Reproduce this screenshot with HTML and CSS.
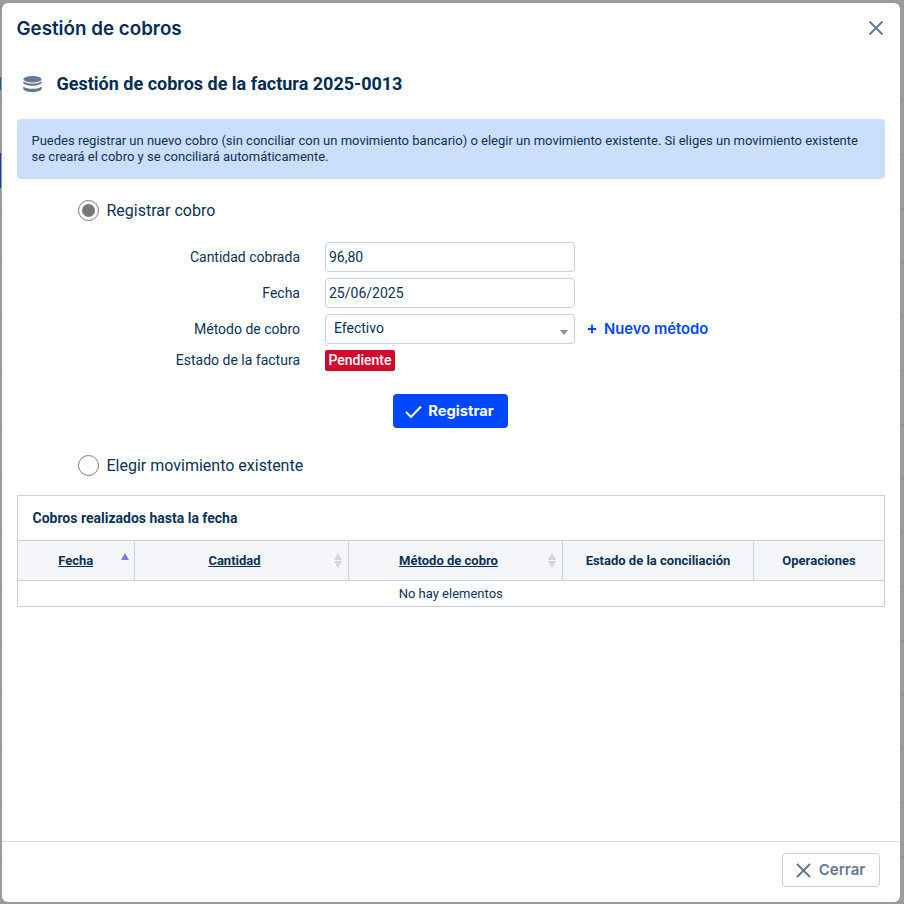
FILE: index.html
```html
<!DOCTYPE html>
<html lang="es">
<head>
<meta charset="utf-8">
<title>Gestión de cobros</title>
<link rel="stylesheet" href="styles.css">
</head>
<body>
<div class="modal">
  <header class="modal-header">
    <h1 class="modal-title">Gestión de cobros</h1>
    <svg class="close-icon" viewBox="0 0 16 16" width="16" height="16"><path d="M1.5 1.5L14.5 14.5M14.5 1.5L1.5 14.5"/></svg>
  </header>
  <main class="modal-body">
    <div class="subtitle">
      <svg class="db-icon" viewBox="0 0 19 17" width="19" height="17">
        <ellipse cx="9.5" cy="3.2" rx="9.2" ry="3.2"/>
        <path d="M.3 5.2v1.3c0 1.8 4.1 3.2 9.2 3.2s9.2-1.4 9.2-3.2V5.2c-1.7 1.6-5.3 2.4-9.2 2.4S2 6.8.3 5.2z"/>
        <path d="M.3 10.4v2.4c0 1.8 4.1 3.2 9.2 3.2s9.2-1.400 9.200-3.200v-2.400c-1.700 1.600-5.300 2.400-9.200 2.400S2 12 .3 10.400z"/>
      </svg>
      <h2 class="subtitle-text">Gestión de cobros de la factura 2025-0013</h2>
    </div>
    <div class="notice">Puedes registrar un nuevo cobro (sin conciliar con un movimiento bancario) o elegir un movimiento existente. Si eliges un movimiento existente<br>se creará el cobro y se conciliará automáticamente.</div>
    <div class="radio-row first"><span class="radio checked"></span><span>Registrar cobro</span></div>
    <div class="form-grid">
      <label class="form-label">Cantidad cobrada</label>
      <div class="input">96,80</div>
      <label class="form-label">Fecha</label>
      <div class="input">25/06/2025</div>
      <label class="form-label">Método de cobro</label>
      <div class="method-field">
        <div class="input select">Efectivo<span class="caret"></span></div>
        <a class="new-method"><svg viewBox="0 0 10 10" width="10" height="10"><path d="M5 .8v8.400M.8 5h8.400"/></svg>Nuevo método</a>
      </div>
      <label class="form-label status">Estado de la factura</label>
      <div><span class="badge">Pendiente</span></div>
    </div>
    <div class="submit-row">
      <button class="btn-primary"><svg viewBox="0 0 17 13" width="17" height="13"><path d="M1 7l5 5L16 1.500"/></svg>Registrar</button>
    </div>
    <div class="radio-row second"><span class="radio"></span><span>Elegir movimiento existente</span></div>
    <section class="panel">
      <div class="panel-title">Cobros realizados hasta la fecha</div>
      <table class="data-table">
        <colgroup><col class="c1"><col class="c2"><col class="c3"><col class="c4"><col class="c5"></colgroup>
        <thead>
          <tr>
            <th><u>Fecha</u><span class="sort asc"></span></th>
            <th class="sortable"><u>Cantidad</u><span class="sort both"></span></th>
            <th class="sortable"><u>Método de cobro</u><span class="sort both"></span></th>
            <th>Estado de la conciliación</th>
            <th>Operaciones</th>
          </tr>
        </thead>
        <tbody>
          <tr><td colspan="5">No hay elementos</td></tr>
        </tbody>
      </table>
    </section>
  </main>
  <footer class="modal-footer">
    <button class="btn-close"><svg viewBox="0 0 15 15" width="15" height="15"><path d="M1 1l13 13M14 1L1 14"/></svg>Cerrar</button>
  </footer>
</div>
</body>
</html>
```
FILE: styles.css
```css
* { box-sizing: border-box; }
html, body { margin: 0; height: 100%; }
body {
  background:
    linear-gradient(#0b5fa8, #0b5fa8) 0 77px / 1px 13px no-repeat,
    linear-gradient(#0b3fc0, #0b3fc0) 0 153px / 1px 35px no-repeat,
    repeating-linear-gradient(transparent 0 53px, #8c8c8c 53px 54px) 0 47px,
    #9b9b9b;
  font-family: Roboto, "Liberation Sans", sans-serif;
  color: #0b3258;
  overflow: hidden;
}
.modal {
  margin: 3px 4px 2px 1.5px;
  height: 899px;
  background: #fff;
  border-radius: 6px;
  display: flex;
  flex-direction: column;
}
.modal-header {
  height: 51px;
  padding: 0 16.500px 0 15px;
  display: flex;
  align-items: center;
  justify-content: space-between;
}
.modal-title {
  margin: 0;
  font: 600 18.800px/24px Inter, sans-serif;
  color: #002d55;
}
.close-icon { margin-bottom: 2px; }
.close-icon path { fill: none; stroke: #64788f; stroke-width: 1.9; }
.modal-body { flex: 1; padding: 0 15px; }
.subtitle {
  height: 60px;
  display: flex;
  align-items: center;
  padding-left: 6px;
  gap: 15px;
}
.db-icon { fill: #64788f; flex: none; }
.subtitle-text { margin: 0; font: 700 18px/24px Roboto, sans-serif; color: #002d55; }
.notice {
  margin-top: 5px;
  height: 60px;
  background: #cbdffd;
  border-radius: 4px;
  padding: 14px 15px;
  font-size: 13px;
  line-height: 15.500px;
}
.radio-row {
  display: flex;
  align-items: center;
  gap: 8px;
  padding-left: 61px;
  font-size: 16px;
  line-height: 20px;
}
.radio-row.first { margin-top: 21px; }
.radio-row.second { margin-top: 27px; }
.radio {
  width: 21px;
  height: 21px;
  border: 1px solid #7a7a7a;
  border-radius: 50%;
  background: #fff;
  display: block;
  flex: none;
}
.radio.checked { padding: 3px; background: #777 content-box; }
.form-grid {
  margin-top: 21px;
  display: grid;
  grid-template-columns: 283.500px 1fr;
  column-gap: 25px;
  row-gap: 6px;
  font-size: 14px;
}
.form-label { text-align: right; line-height: 30px; }
.form-label.status { line-height: 21px; }
.input {
  width: 250px;
  height: 30px;
  border: 1px solid #c7d2de;
  border-radius: 4px;
  padding: 0 3px;
  line-height: 28px;
  font-size: 14px;
  background: #fff;
}
.select { position: relative; padding-left: 8px; line-height: 26px; }
.caret {
  position: absolute;
  right: 6px;
  top: 15px;
  border-left: 4px solid transparent;
  border-right: 4px solid transparent;
  border-top: 5px solid #8f8f8f;
}
.method-field { display: flex; align-items: center; gap: 12px; }
.new-method {
  display: flex;
  align-items: center;
  gap: 7px;
  color: #0047ff;
  font: 600 14.800px/18px Inter, sans-serif;
}
.new-method path { fill: none; stroke: #0047ff; stroke-width: 1.800; }
.badge {
  display: block;
  width: 70px;
  height: 21px;
  background: #d10a2e;
  color: #fff;
  border-radius: 2px;
  font-size: 14px;
  font-weight: 500;
  line-height: 21px;
  text-align: center;
}
.submit-row { margin-top: 23px; padding-left: 376.500px; }
.btn-primary {
  width: 115px;
  height: 34px;
  background: #0047ff;
  color: #fff;
  border: 0;
  border-radius: 4px;
  display: flex;
  align-items: center;
  justify-content: center;
  gap: 6px;
  font: 700 14.700px/18px Inter, sans-serif;
  padding: 0 2px 0 0;
}
.btn-primary path { fill: none; stroke: #fff; stroke-width: 2; }
.panel { margin-top: 19px; border: 1px solid #c7d2de; }
.panel-title {
  height: 44px;
  padding-left: 15px;
  font-size: 14px;
  font-weight: 700;
  line-height: 44px;
}
.data-table { width: 100%; border-collapse: collapse; table-layout: fixed; font-size: 13px; }
.c1 { width: 117px; }
.c2 { width: 214px; }
.c3 { width: 214px; }
.c4 { width: 191px; }
.data-table th {
  position: relative;
  height: 40px;
  padding: 0;
  background: #f4f6f9;
  border: 1px solid #c7d2de;
  font-weight: 700;
  text-align: center;
}
.data-table th:first-child { border-left: 0; }
.data-table th:last-child { border-right: 0; }
.data-table th.sortable { padding-right: 14px; }
.data-table td { height: 25px; padding: 0; text-align: center; }
.sort { position: absolute; right: 5px; top: 12px; }
.sort.asc {
  border-left: 4.500px solid transparent;
  border-right: 4.500px solid transparent;
  border-bottom: 7px solid #7c7fd8;
}
.sort.both {
  width: 9px;
  height: 15px;
}
.sort.both::before,
.sort.both::after {
  content: "";
  position: absolute;
  left: 0;
  border-left: 4.500px solid transparent;
  border-right: 4.500px solid transparent;
}
.sort.both::before { top: 0; border-bottom: 7px solid #d3d6da; }
.sort.both::after { top: 8px; border-top: 7px solid #d3d6da; }
.modal-footer {
  height: 61px;
  border-top: 1px solid #d5dce4;
  padding: 11px 20px 0 0;
  display: flex;
  justify-content: flex-end;
  align-items: flex-start;
}
.btn-close {
  width: 98px;
  height: 34px;
  background: #fff;
  border: 1px solid #c7d2de;
  border-radius: 4px;
  color: #64788f;
  display: flex;
  align-items: center;
  justify-content: center;
  gap: 8px;
  font: 600 15px/18px Inter, sans-serif;
  padding: 0 1px 0 0;
}
.btn-close path { fill: none; stroke: #64788f; stroke-width: 1.900; }
```
